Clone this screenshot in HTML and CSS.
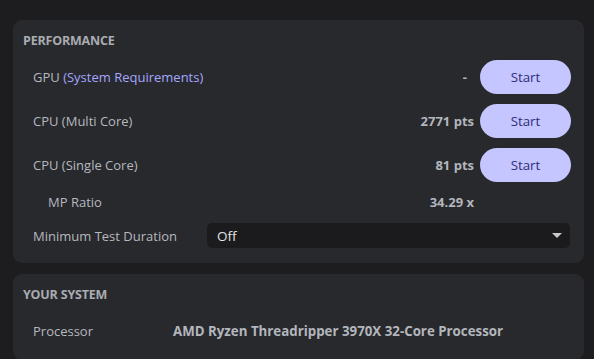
FILE: index.html
```html
<!DOCTYPE html>
<html>
<head>
<meta charset="utf-8">
<link rel="stylesheet" href="styles.css">
</head>
<body>
<div class="page">
  <section class="card">
    <h2 class="card-title">PERFORMANCE</h2>
    <div class="rows">
      <div class="row row-bench">
        <span class="label">GPU <span class="link">(System Requirements)</span></span>
        <span class="value value-dash">-</span>
        <button class="btn">Start</button>
      </div>
      <div class="row row-bench">
        <span class="label">CPU (Multi Core)</span>
        <span class="value">2771 pts</span>
        <button class="btn">Start</button>
      </div>
      <div class="row row-bench">
        <span class="label">CPU (Single Core)</span>
        <span class="value">81 pts</span>
        <button class="btn">Start</button>
      </div>
      <div class="row row-ratio">
        <span class="label label-sub">MP Ratio</span>
        <span class="value value-ratio">34.29 x</span>
      </div>
      <div class="row row-select">
        <span class="label label-fixed">Minimum Test Duration</span>
        <div class="select">
          <span class="select-text">Off</span>
          <span class="caret"></span>
        </div>
      </div>
    </div>
  </section>
  <section class="card card-system">
    <h2 class="card-title">YOUR SYSTEM</h2>
    <div class="rows">
      <div class="row row-info">
        <span class="label label-info">Processor</span>
        <span class="info-value">AMD Ryzen Threadripper 3970X 32-Core Processor</span>
      </div>
    </div>
  </section>
</div>
</body>
</html>
```

FILE: styles.css
```css
* { box-sizing: border-box; }
html, body {
  margin: 0;
  padding: 0;
  background: #1d1d1f;
  height: 100%;
  overflow: hidden;
}
body {
  font-family: "Open Sans", "Noto Sans", sans-serif;
  font-size: 13px;
  color: #b5b8bf;
}
.page {
  padding: 20px 10px 0 13px;
  display: flex;
  flex-direction: column;
  gap: 11px;
}
.card {
  background: #28292d;
  border-radius: 9px;
  padding: 12px 13px 15px 10px;
}
.card-system {
  padding-bottom: 12px;
}
.card-title {
  margin: 0;
  font-size: 12.5px;
  font-weight: 700;
  line-height: 18px;
  color: #a9acb2;
  letter-spacing: -0.2px;
}
.rows {
  display: flex;
  flex-direction: column;
}
.row {
  display: flex;
  align-items: center;
  padding-left: 10px;
}
.row-bench {
  height: 34px;
  margin-top: 10px;
}
.row-ratio {
  height: 24px;
  margin-top: 8px;
}
.row-select {
  height: 25px;
  margin-top: 9px;
}
.row-info {
  height: 34px;
  margin-top: 10px;
}
.label {
  flex: 1;
  color: #b5b8bf;
}
.label-sub {
  padding-left: 15px;
}
.label-fixed {
  flex: 0 0 174px;
}
.label-info {
  flex: 0 0 140px;
}
.link {
  color: #a5a6ff;
}
.value {
  font-weight: 700;
  color: #b3b6bc;
  margin-right: 6px;
}
.value-dash {
  margin-right: 13px;
}
.value-ratio {
  margin-right: 97px;
}
.btn {
  width: 91px;
  height: 34px;
  border: none;
  border-radius: 17px;
  background: #c5c5ff;
  color: #2e2e78;
  font-family: inherit;
  font-size: 13.3px;
  padding: 0;
  cursor: pointer;
}
.select {
  flex: 1;
  height: 25px;
  background: #1b1b1d;
  border-radius: 5px;
  display: flex;
  align-items: center;
  justify-content: space-between;
  padding: 0 8px 0 10px;
  margin-right: 1px;
}
.select-text {
  color: #e2e2e2;
  font-size: 13.5px;
}
.caret {
  width: 0;
  height: 0;
  border-left: 5px solid transparent;
  border-right: 5px solid transparent;
  border-top: 5px solid #c9c9c9;
}
.info-value {
  font-weight: 700;
  font-size: 13.3px;
  color: #b3b6bc;
}
```
